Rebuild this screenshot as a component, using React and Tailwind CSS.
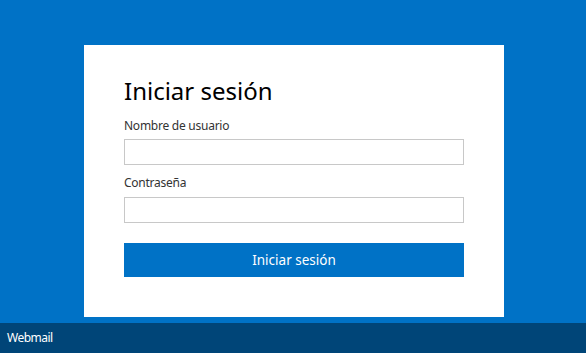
export default function App() {
  return (
    <div
      className="flex h-[353px] w-full flex-col bg-[#0072c6]"
      style={{ fontFamily: '"Noto Sans", "Open Sans", sans-serif' }}
    >
      <main className="flex-1 pl-[2px]">
        <div className="mx-auto mt-[45px] w-[420px] bg-white px-10 pt-[30px] pb-10">
          <h1 className="text-[24px] leading-[32px] text-black">Iniciar sesión</h1>
          <form onSubmit={(e) => e.preventDefault()}>
            <label className="mt-[11px] block text-[12px] leading-[16px] tracking-[-0.25px] text-[#333]">
              Nombre de usuario
            </label>
            <input
              type="text"
              className="mt-[5px] block h-[26px] w-full border border-[#c8c8c8] bg-white px-2 text-[13px] outline-none"
            />
            <label className="mt-[10px] block text-[12px] leading-[16px] tracking-[-0.25px] text-[#333]">
              Contraseña
            </label>
            <input
              type="password"
              className="mt-[6px] block h-[26px] w-full border border-[#c8c8c8] bg-white px-2 text-[13px] outline-none"
            />
            <button
              type="submit"
              className="mt-[20px] block h-[34px] w-full bg-[#0072c6] text-[13.5px] text-white"
            >
              Iniciar sesión
            </button>
          </form>
        </div>
      </main>
      <footer className="flex h-[30px] items-center bg-[#004578] px-[7px] text-[12px] tracking-[-0.5px] text-white">
        Webmail
      </footer>
    </div>
  )
}
